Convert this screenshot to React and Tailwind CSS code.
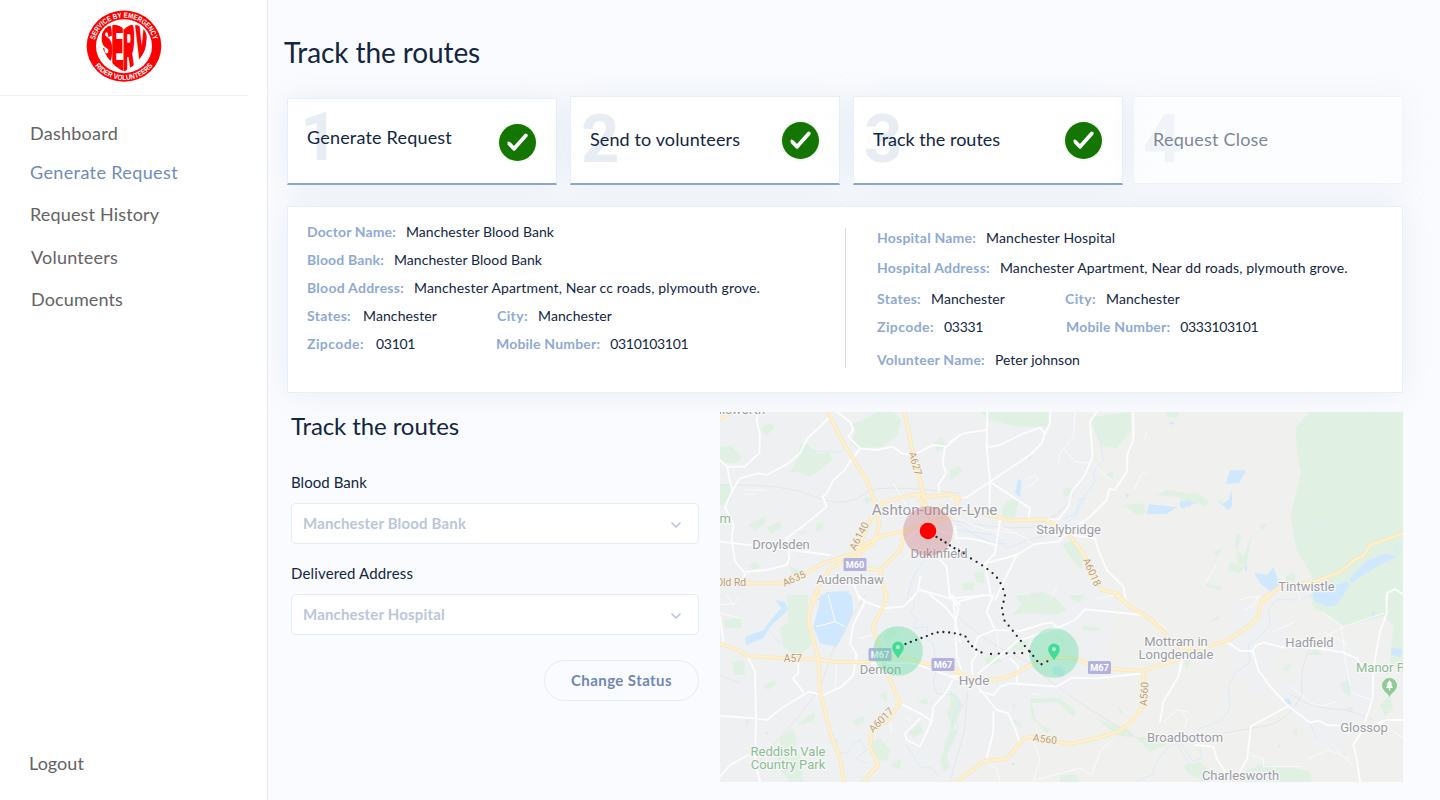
import React from 'react';

const TILES = [
  {
    x: 720, y: 410,
    lgreen: [
      'M400 40 L450 20 L470 6 L520 6 L545 30 L530 80 L480 112 L410 115 L390 95 L405 70Z',
      'M210 190 L235 140 L240 105 L262 100 L290 130 L330 125 L335 150 L300 180 L270 200 L235 185Z',
      'M0 110 L30 105 L65 140 L50 160 L15 160 L0 150Z', 'M0 225 L30 220 L35 270 L15 285 L0 285Z',
      'M120 55 L150 38 L165 50 L140 78Z', 'M85 345 L130 320 L140 335 L105 362Z', 'M140 355 L180 332 L185 355 L150 372Z',
      'M290 340 L310 335 L308 360 L285 365Z', 'M640 100 L665 80 L680 110 L650 125Z', 'M85 465 L105 455 L120 470 L100 480Z',
      'M205 470 L245 480 L250 500 L215 490Z', 'M430 265 L465 262 L440 285Z',
    ],
    water: ['M290 570 L320 546 L385 543 L395 570Z'],
    lines: ['M280 120 L300 125 L320 122 L350 128 L385 118', 'M225 350 L240 370 L260 365', 'M560 570 L580 500 L620 440'],
    gray: ['M0 225 Q200 220 290 262 Q380 300 450 240 Q520 225 720 250'],
    minor: ['M75 240 L135 240', 'M75 253 L105 253', 'M200 375 L195 410 L225 440', 'M520 220 L560 290', 'M520 430 L600 350 L690 370 L720 400', 'M600 400 L550 450'],
    white: [
      'M0 150 L22 170 L75 170 L95 150 L118 130 L120 75 L110 30 L115 6',
      'M22 172 L30 215 L38 240 L15 290 L40 345 L35 390 L45 455 L75 490 L70 510',
      'M38 240 L60 205 L115 190 L140 195 L205 160 L240 130 L262 85 L300 50 L335 15',
      'M350 6 L390 35 L400 60 L385 80 L420 115 L390 155 L370 185 L340 210 L320 250 L308 260 L320 290 L260 340 L200 385 L208 445 L200 465 L140 480 L80 485',
      'M420 115 L470 120 L520 110 L545 130 L580 135 L640 105 L680 110 L720 75',
      'M675 110 L668 160 L678 190 L655 225 L657 245', 'M0 395 L150 412 L330 435',
      'M660 450 L680 470 L690 570', 'M600 500 L595 540 L575 570', 'M400 520 L420 570', 'M600 540 L690 565',
    ],
    road: ['M323 6 L370 100 L440 210 L470 290 L478 350 L460 400 L400 440 L330 475 L275 570', 'M0 27 L40 6', 'M553 6 L577 120 L598 200 L625 320', 'M78 520 L180 520 L240 500 L310 460 L400 430 L440 400 L480 380 L560 360 L690 320', 'M415 415 L455 320 L490 275 L590 252 L630 260 L690 253 L720 265', 'M590 252 L612 290', 'M415 435 L430 475 L480 480 L500 570', 'M480 480 L540 420 L555 365'],
  },
  {
    x: 950, y: 410,
    lgreen: ['M90 6 L300 6 L290 50 L200 50 L120 30Z', 'M430 20 L540 6 L545 60 L500 115 L460 110 L435 70Z', 'M0 180 L25 168 L40 180 L0 212Z', 'M155 300 L175 270 L205 265 L195 325 L160 320Z', 'M335 400 L370 395 L400 450 L395 480 L360 440Z', 'M240 550 L280 545 L320 570 L240 570Z', 'M520 285 L580 280 L590 310 L560 315Z', 'M620 255 L650 240 L710 250 L690 262Z', 'M225 145 L250 132 L240 150Z', 'M650 6 L690 6 L680 25 L650 20Z', 'M40 520 L75 515 L70 540 L35 540Z', 'M340 240 L360 230 L370 245 L340 265Z', 'M465 195 L490 180 L490 205Z', 'M70 490 L100 485 L105 520 L80 515Z'],
    water: ['M597 283 L680 292 L650 312 L590 312Z', 'M690 280 L720 270 L720 292Z', 'M205 205 L215 215 L210 262 L195 250Z', 'M525 250 L538 256 L530 265Z', 'M660 35 L675 38 L670 44 L658 41Z'],
    lines: ['M425 30 L450 90 L460 150 L430 185 L435 215 L400 265 L375 320 L300 375 L250 385 L170 415 L130 375 L20 360', 'M20 340 Q120 410 170 400', 'M405 265 L385 270 L380 310 L345 325'],
    gray: ['M0 330 Q150 360 240 352 Q340 320 370 255'],
    minor: ['M375 6 L370 80 L330 130 L325 160', 'M340 115 L375 155 L420 160', 'M235 230 L265 210 L255 195 L232 205', 'M555 235 L575 190 L590 190', 'M430 160 L480 210', 'M305 560 L320 530', 'M150 350 L230 385 L240 400', 'M590 65 L585 85', 'M20 325 L110 360 L200 370'],
    white: [
      'M112 6 L110 110 L120 215 L118 310', 'M0 95 L40 70 L110 60', 'M110 112 L150 105 L210 75 L270 52 L285 70 L275 100 L240 135 L120 215 L50 262 L0 265',
      'M300 6 L300 40 L285 70', 'M440 6 L420 35 L428 140 L405 195 L365 245 L355 290 L325 328 L280 328', 'M550 6 L550 90 L533 130 L530 185 L495 240 L478 235 L470 270 L420 320 L355 365 L325 395 L255 402 L200 435 L105 460',
      'M120 215 L240 295 L235 325', 'M150 330 L135 430 L105 460 L125 570', 'M200 435 L135 570', 'M15 350 L20 385 L60 385 L140 405', 'M365 375 L435 385 L445 420 L470 480 L520 530 L527 570', 'M0 565 L120 555',
    ],
    road: ['M0 258 L25 265 L20 290', 'M-30 288 L70 308 L150 322 L180 332 L285 328 L355 370 L405 440 L455 540 L500 550 L522 570'],
  },
  {
    x: 1180, y: 410,
    lgreen: [
      'M390 6 L348 50 L350 130 L363 190 L345 260 L332 320 L350 420 L400 505 L395 570 L669 570 L669 6Z',
      'M0 250 L50 250 L85 270 L80 290 L40 278 L0 270Z', 'M95 425 L130 418 L110 440Z', 'M170 370 L185 380 L170 420 L172 460 L200 470 L215 370 L190 440 L165 410Z', 'M150 455 L195 470 L180 490 L145 482Z', 'M240 345 L265 340 L245 362Z', 'M320 495 L345 488 L345 515 L315 512Z', 'M75 520 L125 530 L120 540 L80 530Z', 'M110 275 L130 265 L125 285Z',
    ],
    water: ['M150 181 L198 181 L177 220 L137 221Z', 'M155 240 L157 285 L145 302 L125 283 L145 270Z', 'M0 272 L50 278 L10 295 L0 290Z', 'M222 488 L262 495 L280 470 L295 510 L300 535 L270 545 L240 520Z', 'M397 548 L500 515 L510 525 L480 570 L400 570Z', 'M510 505 L560 452 L610 432 L655 438 L600 465 L540 500 L515 520Z', 'M193 470 L202 468 L200 490Z'],
    lines: ['M355 395 L430 340 L445 332', 'M645 435 L645 410 L669 405', 'M360 570 L400 550'],
    gray: [],
    minor: ['M180 570 L210 560 L255 565', 'M350 540 L362 570', 'M110 465 L75 520'],
    white: ['M620 570 L622 548 L645 538 L669 552'],
    road: ['M245 570 L300 530 L400 515 L480 487 L525 448 L550 438 L570 405 L620 388 L669 370'],
  },
  {
    x: 720, y: 595,
    lgreen: ['M200 0 L265 0 L262 80 L275 150 L235 185 L190 155 L180 100 L205 80Z', 'M10 75 L60 65 L65 100 L15 100Z', 'M38 200 L72 195 L75 240 L42 240Z', 'M130 275 L160 255 L170 265 L145 285Z', 'M180 430 L215 400 L230 425 L225 450 L180 450Z', 'M170 450 L225 450 L245 490 L250 560 L210 560 L175 520Z', 'M565 410 L600 385 L610 410 L580 430Z', 'M395 380 L430 362 L435 380 L405 392Z', 'M450 440 L480 430 L510 465 L500 500 L470 490Z', 'M680 350 L720 310 L720 340 L690 380Z', 'M690 400 L715 410 L680 480 L690 520 L670 530 L660 500Z', 'M490 120 L520 95 L535 120 L500 140Z', 'M590 320 L620 310 L625 330Z', 'M230 390 L260 365 L285 350 L280 380Z', 'M75 375 L90 372 L80 400Z', 'M480 300 L500 290 L500 320Z', 'M510 510 L545 490 L540 525Z', 'M325 440 L355 430 L350 450Z'],
    water: ['M290 55 L305 0 L395 0 L400 50 L380 100 L350 156 L300 145 L280 95Z', 'M75 125 L130 105 L160 65 L185 40 L165 15 L195 20 L205 45 L150 95 L130 130 L78 150Z', 'M133 410 L148 412 L140 420Z'],
    lines: ['M140 100 L165 130 L195 150', 'M575 0 L585 30 L570 50 L590 75 L580 100 L625 95 L615 130 L640 145 L650 220 L640 260 L650 295 L700 300 L720 320', 'M350 470 L380 475 L400 445 L420 435 L440 465 L410 490 L440 505', 'M560 450 L600 515 L640 520 L655 545', 'M720 330 L700 360 L715 400 L670 440 L690 470'],
    gray: ['M100 520 L230 370 L300 280 L345 150 L435 0', 'M0 240 L60 265'],
    minor: ['M0 55 L60 70', 'M20 0 L40 30 L55 10', 'M350 210 L345 290', 'M420 130 L455 120', 'M570 380 L560 360', 'M510 380 L515 410', 'M0 30 L40 25', 'M290 95 L345 80 L375 95', 'M325 0 L345 80'],
    white: [
      'M0 65 L10 140', 'M83 185 L105 230 L108 370 L105 500 L120 560', 'M0 363 L105 370 L140 375 L185 340 L265 290 L310 300 L365 275 L400 240 L410 180 L390 145 L400 90 L435 20 L415 0',
      'M235 195 L235 235 L218 250 L250 290', 'M0 545 L30 510 L85 480', 'M435 20 L490 40 L550 35 L585 0', 'M540 325 L600 355 L635 378 L600 455 L560 435 L555 415 L600 370', 'M635 378 L640 335 L680 290 L698 255', 'M455 205 L580 205 L640 225 L720 255', 'M690 0 L720 30', 'M700 0 L705 80', 'M630 0 L680 40 L705 75 L720 140',
    ],
    road: ['M298 0 Q260 30 268 90 L295 190 L300 290 L330 410 L360 490 L372 560', 'M0 147 L55 165 L83 183 L200 190 L290 192 L340 200 L430 202 L540 182 L610 205 L690 215 L720 230', 'M500 0 L485 45 L458 95 L500 230 L540 325 L505 375 L455 410 L450 455 L475 510 L430 560'],
  },
  {
    x: 950, y: 595,
    lgreen: ['M195 0 L310 0 L350 45 L320 60 L230 55 L185 60 L215 30Z', 'M105 190 L140 175 L155 200 L110 215Z', 'M360 0 L405 0 L390 25 L360 10Z', 'M240 310 L330 310 L380 350 L370 365 L320 320 L245 325 L260 380 L300 405 L290 415 L245 370Z', 'M180 145 L240 135 L230 155 L190 175Z', 'M395 90 L450 100 L450 108 L400 105Z', 'M440 370 L540 405 L550 430 L500 420Z', 'M330 540 L380 538 L385 560 L330 560Z', 'M560 430 L620 420 L650 450 L600 470Z', 'M0 290 L20 300 L40 330 L10 400 L0 400Z', 'M500 335 L520 345 L515 360Z', 'M190 320 L200 330 L188 345Z', 'M175 370 L210 380 L215 400Z', 'M310 120 L345 130 L340 145Z'],
    water: ['M305 220 L325 210 L345 230 L340 245 L310 238Z', 'M184 503 L196 503 L190 512Z'],
    lines: ['M0 290 Q40 310 25 350 Q0 370 10 400', 'M560 560 L605 540 L615 510 L650 460 L680 445 L720 510', 'M0 440 L15 420'],
    gray: ['M0 40 Q80 130 230 200 Q380 330 570 432 L720 430', 'M52 290 L45 400 L0 560'],
    minor: ['M140 110 L150 190 L200 170', 'M250 440 L270 490 L250 560', 'M255 555 L330 535 L390 520 L425 540 L450 470 L490 430', 'M440 10 L500 0', 'M640 380 L680 345 L710 350', 'M625 85 L655 105', 'M245 295 L265 300', 'M120 510 L140 520 L150 560'],
    white: [
      'M0 0 L25 40 L15 90 L20 180 L40 245', 'M25 20 L100 0', 'M130 0 L110 50 L135 105 L210 108 L285 85 L305 82 L325 100', 'M135 105 L85 125 L75 150 L80 180 L65 200 L68 240', 'M325 98 L375 75 L405 43 L580 60', 'M330 95 L200 140 L85 235', 'M0 245 L65 240', 'M80 270 L140 345 L175 355 L195 400 L210 445', 'M130 350 L130 410 L110 490', 'M180 190 L205 215 L200 260', 'M130 300 L150 275 L180 265 L320 275 L365 248 L440 250 L575 235', 'M695 200 L685 245 L640 320 L630 380', 'M130 300 L90 290',
    ],
    road: ['M0 225 L70 248 L140 255 L190 240 L250 205 L310 187 L370 190 L450 220 L580 228 L630 210 L690 192', 'M580 228 L582 330 L540 385 L505 410 L440 430 L360 447 L320 440 L240 425 L220 432 L170 492 L105 497 L20 560', 'M497 0 L540 35 L600 70 L640 110 L680 155 L720 162'],
  },
  {
    x: 1180, y: 595,
    lgreen: ['M390 0 L669 0 L669 235 L630 200 L640 90 L610 65 L490 95 L440 60 L400 40Z', 'M80 85 L120 60 L115 75Z', 'M305 225 L335 200 L325 225Z', 'M385 180 L405 160 L430 180Z', 'M480 265 L510 255 L510 310 L490 290Z', 'M600 330 L630 300 L640 340 L615 365Z', 'M495 340 L515 335 L520 352Z', 'M180 560 L190 530 L240 510 L330 515 L390 530 L395 560Z', 'M10 510 L60 500 L100 540 L70 560 L20 530Z', 'M10 195 L40 180 L20 225Z', 'M340 408 L352 402 L350 430Z', 'M480 475 L500 478 L495 490Z'],
    water: ['M400 0 L487 0 L470 30 L440 35 L405 20Z', 'M635 155 L669 165 L660 185 L632 180Z', 'M310 315 L325 310 L335 328 L315 330Z', 'M575 50 L586 52 L582 68Z', 'M294 450 L302 452 L298 460Z'],
    lines: ['M360 0 L340 15 L290 12 L265 45 L270 90 L240 125 L205 150 L210 200 L165 235 L145 275 L150 340 L120 380 L60 400 L30 440', 'M0 440 L40 500 L65 490 L60 460', 'M325 330 L390 385 L410 430', 'M500 260 L508 300'],
    gray: ['M130 415 L270 390 Q330 370 365 300 Q360 200 390 165', 'M335 300 Q400 345 500 345 L580 375'],
    minor: ['M190 45 L220 35 L235 0', 'M280 110 L345 80', 'M485 95 L495 190 L510 270', 'M330 275 L365 300 L390 325 L430 332 L470 320', 'M520 295 L575 315', 'M210 480 L250 490 L250 515 L360 515', 'M385 490 L445 465 L510 490', 'M425 50 L490 95 L430 130 M490 95 L610 55', 'M0 345 L20 370 L15 400', 'M430 110 L500 145 L490 160', 'M470 465 L520 515', 'M630 400 L669 430'],
    white: [
      'M140 140 L180 167 L215 168 L230 150 L250 142 L310 158 L350 155 L430 162 L490 172 L530 190 L545 210', 'M218 168 L235 225 L275 280 L325 333 L390 383 L415 376 L440 390 L480 392',
      'M325 333 L212 395 L202 490 L180 530', 'M620 0 L620 55 L600 110 L580 220 L578 310 L555 380', 'M545 410 L520 450 L530 490 L540 560', 'M595 385 L620 375 L669 375', 'M45 450 L100 455 L110 490 L135 530', 'M5 185 L0 230',
    ],
    road: ['M0 158 L30 163 L80 155 L145 135 L210 90 L235 65 L240 30 L272 0'],
  },
];

const STYLES = [
  ['lgreen', { fill: '#e0f1e4' }],
  ['water', { fill: '#d0e8fd' }],
  ['lines', { fill: 'none', stroke: '#d6e9fa', strokeWidth: 2.5 }],
  ['gray', { fill: 'none', stroke: '#e2e3e6', strokeWidth: 2.5 }],
  ['minor', { fill: 'none', stroke: '#fafafb', strokeWidth: 3 }],
  ['white', { fill: 'none', stroke: '#fdfdfe', strokeWidth: 5.5 }],
  ['road', { fill: 'none', stroke: '#f8e5b8', strokeWidth: 11 }],
  ['road', { fill: 'none', stroke: '#fdf0cb', strokeWidth: 7.5 }],
];

const PLACES = [
  ['llsworth', 742, 414, 13], ['Ashton-under-Lyne', 934.5, 515, 15.2], ['Dukinfield', 939, 558, 13], ['Droylsden', 781, 548.5, 13],
  ['Audenshaw', 850, 583.5, 13], ['Stalybridge', 1068.5, 533.5, 13], ['Tintwistle', 1306.5, 590.5, 13], ['Denton', 880.5, 673.5, 13],
  ['Hyde', 974, 684.5, 13.5], ['Mottram in', 1176, 645.5, 13], ['Longdendale', 1176, 658.5, 13], ['Hadfield', 1309.5, 646.5, 13],
  ['Glossop', 1364, 731.5, 13], ['Broadbottom', 1185, 741.5, 13], ['Charlesworth', 1240.5, 779.5, 13],
];

const ROADS = [
  ['A627', 915.5, 463.5, 74], ['A6140', 859, 536, -62], ['A635', 794, 578.5, -24], ['Old Rd', 731, 582, 0], ['A57', 793, 658, 0],
  ['A6017', 881, 720, -45], ['A6018', 1092, 572, 66], ['A560', 1144, 694, -86], ['A560', 1045, 739, 7],
];

const SHIELDS = [['M60', 855, 564.5], ['M67', 880, 654.5], ['M67', 943, 664.5], ['M67', 1099.5, 667.5]];

const Pin = ({ x, y }) => (
  <path transform={`translate(${x} ${y})`} d="M0 8 C-2 4-5.8 1-5.8-3.2 A5.8 5.8 0 0 1 5.8-3.2 C5.8 1 2 4 0 8Z M0-5.4 A2.1 2.1 0 1 0 0-1.2 A2.1 2.1 0 1 0 0-5.4Z" fill="#42dc97" fillRule="evenodd" />
);

function RouteMap() {
  return (
    <svg className="block h-[370px] w-[683px] shrink-0" viewBox="720 412 683 370" fontFamily="Roboto, sans-serif">
      <rect x="720" y="412" width="683" height="370" fill="#f0f0ef" />
      <path d="M720 412 H1075 L1100 470 L1060 560 L1120 600 L1100 680 L1000 740 L940 782 H720Z M1230 600 L1290 620 L1260 700 L1230 660Z M1270 690 L1350 640 L1380 690 L1330 760Z" fill="#eff0f2" />
      {STYLES.map(([key, style], i) => (
        <g key={i} strokeLinejoin="round" strokeLinecap="round" {...style}>
          {TILES.map((t) => (
            <g key={`${t.x}-${t.y}`} transform={`translate(${t.x} ${t.y}) scale(0.33333)`}>
              {t[key].map((d, j) => <path key={j} d={d} />)}
            </g>
          ))}
        </g>
      ))}
      <g textAnchor="middle" fill="#9b9ca3" stroke="#f8f8f9" strokeWidth="2.5" paintOrder="stroke" strokeLinejoin="round">
        {PLACES.map(([t, x, y, s]) => <text key={t} x={x} y={y} fontSize={s}>{t}</text>)}
        <g fill="#8bbd93" fontSize="13">
          <text x="788" y="755.5">Reddish Vale</text>
          <text x="788" y="768.5">Country Park</text>
          <text x="1356" y="672" textAnchor="start">Manor Park</text>
          <text x="719.5" y="522.5" textAnchor="start">m</text>
        </g>
        <g fill="#b89d80" stroke="#fbf5e6" strokeWidth="1.5" fontSize="10.3">
          {ROADS.map(([t, x, y, r], i) => <text key={i} transform={`translate(${x} ${y}) rotate(${r})`} y="3.6">{t}</text>)}
        </g>
      </g>
      {SHIELDS.map(([t, x, y], i) => (
        <g key={i}>
          <rect x={x - 11.5} y={y - 6.5} width="23" height="13" rx="1.5" fill="#b3b1e0" />
          <text x={x} y={y + 3.3} fontSize="9.2" fontWeight="700" fill="#fff" textAnchor="middle">{t}</text>
        </g>
      ))}
      <path d="M1389.5 697 C1388 693 1382 690.500 1382 685.500 A7.500 7.500 0 0 1 1397 685.500 C1397 690.500 1391 693 1389.500 697Z" fill="#8fcb96" />
      <path d="M1389.500 680 l3 4.500 h-1.500 l2 3.500 h-2.800 v2.500 h-1.400 v-2.500 h-2.800 l2-3.500 h-1.500Z" fill="#fff" />
      <circle cx="928" cy="531" r="25" fill="#c8767c" fillOpacity="0.37" />
      <circle cx="898" cy="651" r="24.800" fill="#5edda0" fillOpacity="0.4" />
      <circle cx="1054" cy="653" r="24.800" fill="#5edda0" fillOpacity="0.4" />
      <circle cx="928" cy="531" r="8.300" fill="#fe0000" />
      <g fill="none" stroke="#22252b" strokeWidth="2.300" strokeLinecap="round" strokeLinejoin="round">
        <path strokeDasharray="0 5.300" d="M936.500 537 L944 541.500 L954 548 L966 554.500" />
        <path strokeDasharray="0 6.500" d="M971 558.500 L981 564.500 L990 571 Q1002 580 1005 596 L1002 608 L1004 620 L1013 631 L1024 645 L1035 658 L1040 665 L1048 661" />
        <path strokeDasharray="0 5.700" d="M905.500 644 L916 640 L927 636 Q935 632 943 632 Q960 633 966 637 L969 643 Q977 652 984 653" />
        <path strokeDasharray="0 7.800" d="M991 654 L1000 653.500 L1024 653 L1030 651.500" />
      </g>
      <Pin x={898} y={650.500} />
      <Pin x={1054} y={652.500} />
    </svg>
  );
}

function Logo() {
  return (
    <svg className="h-[72px] w-[76px]" viewBox="79 31 228 216" fontFamily="'Liberation Sans', sans-serif" fontWeight="700">
      <defs>
        <clipPath id="heart"><path d="M193 90 C182 74 158 72 143 82 C120 98 122 130 133 154 C146 181 168 204 193 215 C218 204 241 181 254 154 C265 130 267 98 244 82 C228 72 204 74 193 90Z" /></clipPath>
        <path id="arcTop" d="M103 140 A90 86 0 0 1 283 140" />
        <path id="arcBottom" d="M87 140 A106 101 0 0 0 299 140" />
      </defs>
      <ellipse cx="193" cy="139.500" rx="112" ry="107" fill="#fe0000" />
      <ellipse cx="193" cy="139.500" rx="84" ry="81" fill="#fff" />
      <g clipPath="url(#heart)" fill="#fe0000" stroke="#fe0000" strokeWidth="9">
        <text transform="translate(124 184) scale(0.5 1.55)" fontSize="100">S</text>
        <text transform="translate(157 215) scale(0.5 2.1)" fontSize="100">E</text>
        <text transform="translate(191 217) scale(0.46 2.1)" fontSize="100">R</text>
        <text transform="translate(228 186) scale(0.54 1.65)" fontSize="100">V</text>
      </g>
      <g fill="#fff" fontSize="22" textAnchor="middle">
        <text><textPath href="#arcTop" startOffset="50%" textLength="238" lengthAdjust="spacingAndGlyphs">SERVICE BY EMERGENCY</textPath></text>
        <text><textPath href="#arcBottom" startOffset="50%" textLength="200" lengthAdjust="spacingAndGlyphs">RIDER VOLUNTEERS</textPath></text>
      </g>
    </svg>
  );
}

const Check = ({ className = '' }) => (
  <svg className={`h-[43px] w-[43px] overflow-visible ${className}`} viewBox="0 0 43 43">
    <circle cx="21.500" cy="21.500" r="20.500" fill="#f6f8f6" />
    <circle cx="21.500" cy="21.500" r="18.500" fill="#147500" />
    <path d="M13.500 23 L18 27.800 L29.800 14.500" fill="none" stroke="#fff" strokeWidth="3.800" strokeLinecap="round" strokeLinejoin="round" />
    <path d="M12.500 21.500 L18 28.300 L20 26" fill="none" stroke="#fff" strokeWidth="2" strokeLinecap="round" strokeLinejoin="round" />
  </svg>
);

function Step({ n, nClass, title, done, className, bodyClass = '' }) {
  return (
    <div className={`relative flex w-[270px] items-center justify-between border border-[#e8eff8] pr-[17px] pl-[19px] shadow-[0_0_30px_rgba(160,185,210,0.2)] ${className}`}>
      <span className={`absolute font-['Roboto',sans-serif] text-[67px] leading-none font-bold text-[#e8edf4] ${nClass}`}>{n}</span>
      <span className={`relative text-[18px] whitespace-nowrap text-[#12263f] ${bodyClass}`}>{title}</span>
      {done && <Check className={n === 1 ? 'relative top-px' : ''} />}
    </div>
  );
}

const Row = ({ label, value, labelClass = 'tracking-[0.2px]', valueClass = 'tracking-[0.1px]', gap = 'gap-[10px]', className = '' }) => (
  <div className={`flex h-7 items-center text-[14px] whitespace-nowrap ${gap} ${className}`}>
    <span className={`font-bold text-[#8eaad3] ${labelClass}`}>{label}</span>
    <span className={`text-[#12263f] ${valueClass}`}>{value}</span>
  </div>
);

const Select = ({ label, labelClass, value }) => (
  <div className="flex flex-col">
    <span className={`text-[15px] leading-5 text-[#12263f] ${labelClass}`}>{label}</span>
    <div className="mt-[11px] flex h-[41px] items-center justify-between rounded-[5px] border border-[#e3ebf6] bg-white pr-[16px] pl-[11px]">
      <span className="text-[15px] font-bold tracking-[0.17px] text-[#bbc7d9]">{value}</span>
      <svg className="h-3 w-3" viewBox="0 0 12 12" fill="none" stroke="#b4c2d6" strokeWidth="1.500" strokeLinecap="round" strokeLinejoin="round"><path d="M2 5 L6 9 L10 5" /></svg>
    </div>
  </div>
);

export default function App() {
  return (
    <div className="flex h-[800px] w-[1440px] overflow-hidden bg-[#fafbfe] font-['Lato',sans-serif]">
      <aside className="flex w-[268px] shrink-0 flex-col border-r border-[#e6e9f2] bg-white">
        <div className="flex h-24 w-[248px] items-start justify-center border-b border-[#f0f1f4] pt-[10px]"><Logo /></div>
        <nav className="flex flex-col items-start pt-[23px] pl-[30px] text-[18px] leading-7 text-[#636363]">
          <a className="tracking-[0.25px]">Dashboard</a>
          <a className="mt-[11px] tracking-[0.38px] text-[#6f8bb9]">Generate Request</a>
          <a className="mt-[14px] tracking-[0.16px]">Request History</a>
          <a className="mt-[15px] ml-px tracking-[0.2px]">Volunteers</a>
          <a className="mt-[14px] ml-px tracking-[0.13px]">Documents</a>
        </nav>
        <a className="mt-auto mb-[23px] ml-[29px] self-start text-[18px] leading-7 tracking-[0.05px] text-[#636363]">Logout</a>
      </aside>
      <main className="flex flex-1 flex-col pl-[19px]">
        <h1 className="-ml-[3px] h-[96px] pt-[34px] text-[28px] leading-9 tracking-[-0.1px] text-[#12263f]">Track the routes</h1>
        <div className="flex h-[89px] shrink-0">
          <Step n={1} title="Generate Request" done nClass="top-[5px] left-[12px]" bodyClass="-top-[4px] tracking-[0.19px]" className="mt-[2px] border-b-2 border-b-[#8ba6cd] bg-white" />
          <Step n={2} title="Send to volunteers" done nClass="top-[9px] left-[10px]" bodyClass="-top-px tracking-[0.12px]" className="ml-[13px] border-b-2 border-b-[#8ba6cd] bg-white" />
          <Step n={3} title="Track the routes" done nClass="top-[9px] left-[10px]" bodyClass="-top-px" className="ml-[13px] border-b-2 border-b-[#8ba6cd] bg-white" />
          <Step n={4} title="Request Close" nClass="top-[9px] left-[9px]" bodyClass="-top-px tracking-[0.22px]" className="mb-px ml-[10px] bg-white opacity-55" />
        </div>
        <section className="mt-[21px] flex h-[187px] w-[1116px] shrink-0 border border-[#e8eff8] bg-white pl-[19px] shadow-[0_0_30px_rgba(160,185,210,0.2)]">
          <div className="w-[538px] pt-[10px]">
            <Row label="Doctor Name:" labelClass="tracking-[0.13px]" value="Manchester Blood Bank" valueClass="tracking-[0.07px]" />
            <Row label="Blood Bank:" labelClass="tracking-[0.16px]" value="Manchester Blood Bank" valueClass="tracking-[0.07px]" />
            <Row label="Blood Address:" labelClass="tracking-[0.26px]" value="Manchester Apartment, Near cc roads, plymouth grove." valueClass="tracking-[0.14px]" />
            <div className="flex">
              <Row label="States:" labelClass="tracking-[0.29px]" value="Manchester" gap="gap-[12px]" className="w-[190px]" />
              <Row label="City:" labelClass="tracking-[0.4px]" value="Manchester" />
            </div>
            <div className="flex">
              <Row label="Zipcode:" labelClass="tracking-[0.42px]" value="03101" valueClass="tracking-[-0.32px]" gap="gap-[12px]" className="w-[189px]" />
              <Row label="Mobile Number:" value="0310103101" valueClass="tracking-[-0.32px]" />
            </div>
          </div>
          <div className="mt-[21px] h-[140px] w-px bg-[#d5dbe4]" />
          <div className="pt-[16px] pl-[31px]">
            <Row label="Hospital Name:" labelClass="tracking-[0.22px]" value="Manchester Hospital" />
            <Row label="Hospital Address:" labelClass="tracking-[0.24px]" value="Manchester Apartment, Near dd roads, plymouth grove." valueClass="tracking-[0.13px]" className="mt-[2px]" />
            <div className="mt-[3px] flex">
              <Row label="States:" labelClass="tracking-[0.29px]" value="Manchester" className="w-[188px]" />
              <Row label="City:" labelClass="tracking-[0.4px]" value="Manchester" />
            </div>
            <div className="flex">
              <Row label="Zipcode:" labelClass="tracking-[0.42px]" value="03331" valueClass="tracking-[-0.32px]" className="w-[189px]" />
              <Row label="Mobile Number:" value="0333103101" valueClass="tracking-[-0.32px]" />
            </div>
            <Row label="Volunteer Name:" labelClass="tracking-[0.21px]" value="Peter johnson" valueClass="tracking-[0.01px]" className="mt-[5px]" />
          </div>
        </section>
        <div className="mt-[19px] flex">
          <div className="mr-[21px] ml-[4px] flex w-[408px] flex-col">
            <h2 className="-mt-px text-[24px] leading-[30px] tracking-[-0.09px] text-[#12263f]">Track the routes</h2>
            <div className="mt-[31px] flex flex-col gap-[19px]">
              <Select label="Blood Bank" labelClass="tracking-[0.06px]" value="Manchester Blood Bank" />
              <Select label="Delivered Address" labelClass="tracking-[0.15px]" value="Manchester Hospital" />
            </div>
            <button className="mt-[25px] flex h-[41px] w-[155px] items-center justify-center self-end rounded-full border border-[#e3ebf6] text-[15px] font-bold tracking-[0.42px] text-[#7088b0]">Change Status</button>
          </div>
          <RouteMap />
        </div>
      </main>
    </div>
  );
}
